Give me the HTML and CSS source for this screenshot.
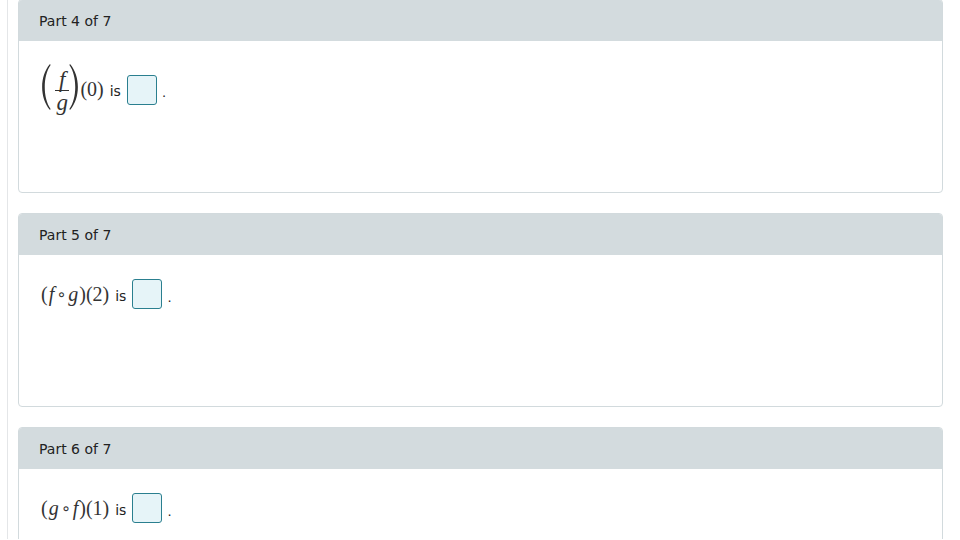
FILE: index.html
```html
<!DOCTYPE html>
<html lang="en">
<head>
    <meta charset="UTF-8">
    <title>Parts</title>
    <link rel="stylesheet" href="styles.css">
</head>
<body>
    <div class="page">
        <div class="part">
            <div class="part-head">Part 4 of 7</div>
            <div class="part-body">
                <span class="math">
                    <svg class="paren" width="10" height="48" viewBox="0 0 10 48">
                        <path d="M9 1 C-1.5 13 -1.5 35 9 47 L9.6 46 C1.8 35 1.8 13 9.6 2 Z" fill="#333"/>
                    </svg>
                    <span class="frac">
                        <span class="num">f</span>
                        <span class="den">g</span>
                    </span>
                    <svg class="paren" width="10" height="48" viewBox="0 0 10 48">
                        <path d="M1 1 C11.5 13 11.5 35 1 47 L0.4 46 C8.2 35 8.2 13 0.4 2 Z" fill="#333"/>
                    </svg>
                    <span class="arg">(0)</span>
                </span>
                <span class="word">is</span>
                <span class="answer"></span>
                <span class="dot">.</span>
            </div>
        </div>

        <div class="part">
            <div class="part-head">Part 5 of 7</div>
            <div class="part-body">
                <span class="math">(<i>f</i><span class="comp">∘</span><i>g</i>)(2)</span>
                <span class="word">is</span>
                <span class="answer"></span>
                <span class="dot">.</span>
            </div>
        </div>

        <div class="part">
            <div class="part-head">Part 6 of 7</div>
            <div class="part-body">
                <span class="math">(<i>g</i><span class="comp">∘</span><i>f</i>)(1)</span>
                <span class="word">is</span>
                <span class="answer"></span>
                <span class="dot">.</span>
            </div>
        </div>
    </div>
</body>
</html>
```

FILE: styles.css
```css
body {
    margin: 0;
    background-color: #fff;
    font-family: "DejaVu Sans", Verdana, sans-serif;
    color: #222;
    overflow: hidden;
}

.page {
    margin-left: 7px;
    border-left: 1px solid #e4e6e8;
    padding-left: 10px;
    height: 540px;
    width: 925px;
}

.part {
    border: 1px solid #d2dadd;
    border-radius: 4px;
    height: 192px;
    margin-bottom: 20px;
    overflow: hidden;
}

.part:first-child {
    margin-top: -1px;
}

.part-head {
    background-color: #d3dbde;
    height: 41px;
    line-height: 41px;
    padding-top: 1px;
    box-sizing: border-box;
    padding-left: 20px;
    font-size: 14px;
    color: #222;
}

.part-body {
    display: flex;
    align-items: center;
    padding: 24px 20px 0;
}

.math {
    font-family: "Liberation Serif", "Times New Roman", serif;
    font-size: 20px;
    color: #333;
    display: inline-flex;
    align-items: center;
    padding-left: 2px;
}

.math i {
    padding: 0 1px;
}

.comp {
    font-family: "DejaVu Sans", sans-serif;
    font-size: 16px;
    margin: 0 1px;
}

.paren {
    display: block;
    margin-top: -6px;
}

.frac {
    display: inline-flex;
    flex-direction: column;
    align-items: center;
    font-style: italic;
    font-size: 23px;
    margin: 4px 0 0 4px;
}

.frac .num {
    border-bottom: 1px solid #333;
    padding: 0 4px;
    line-height: 21px;
}

.frac .den {
    line-height: 23px;
}

.arg {
    margin-left: 1px;
}

.word {
    font-size: 14px;
    margin: 3px 6px 0 6px;
}

.answer {
    display: inline-block;
    width: 28px;
    height: 28px;
    border: 1px solid #2a7f8f;
    border-radius: 3px;
    background-color: #e6f4f8;
}

.dot {
    font-size: 13px;
    margin-left: 5px;
    margin-top: 6px;
}
```
